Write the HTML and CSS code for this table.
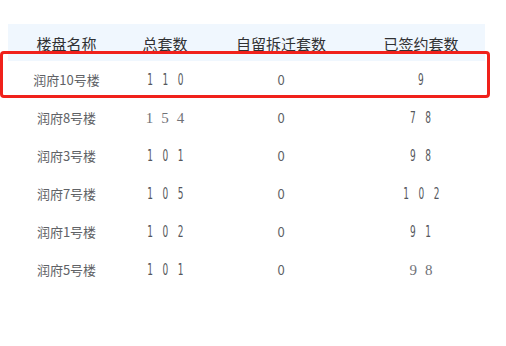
FILE: index.html
```html
<!DOCTYPE html>
<html lang="zh">
<head>
<meta charset="utf-8">
<link rel="stylesheet" href="styles.css">
</head>
<body>
<div class="page">
  <div class="table">
    <div class="row head">
      <div class="cell">楼盘名称</div>
      <div class="cell">总套数</div>
      <div class="cell">自留拆迁套数</div>
      <div class="cell">已签约套数</div>
    </div>
    <div class="row">
      <div class="cell">润府10号楼</div>
      <div class="cell"><span class="num">110</span></div>
      <div class="cell">0</div>
      <div class="cell"><span class="num">9</span></div>
    </div>
    <div class="row">
      <div class="cell">润府8号楼</div>
      <div class="cell"><span class="serif">154</span></div>
      <div class="cell">0</div>
      <div class="cell"><span class="num">78</span></div>
    </div>
    <div class="row">
      <div class="cell">润府3号楼</div>
      <div class="cell"><span class="num">101</span></div>
      <div class="cell">0</div>
      <div class="cell"><span class="num">98</span></div>
    </div>
    <div class="row">
      <div class="cell">润府7号楼</div>
      <div class="cell"><span class="num">105</span></div>
      <div class="cell">0</div>
      <div class="cell"><span class="num">102</span></div>
    </div>
    <div class="row">
      <div class="cell">润府1号楼</div>
      <div class="cell"><span class="num">102</span></div>
      <div class="cell">0</div>
      <div class="cell"><span class="num">91</span></div>
    </div>
    <div class="row">
      <div class="cell">润府5号楼</div>
      <div class="cell"><span class="num">101</span></div>
      <div class="cell">0</div>
      <div class="cell"><span class="serif">98</span></div>
    </div>
    <div class="highlight"></div>
  </div>
</div>
</body>
</html>
```
FILE: styles.css
```css
html, body {
  margin: 0;
  padding: 0;
  background: #ffffff;
}
.page {
  padding: 24px 21px 0 8px;
  font-family: "Noto Sans CJK SC", "Noto Sans", sans-serif;
}
.table {
  position: relative;
  width: 477px;
}
.row {
  display: grid;
  grid-template-columns: 117px 80px 152px 128px;
  height: 38px;
  align-items: center;
  font-size: 13px;
  color: #606266;
}
.row.head {
  height: 37px;
  background: #f0f7fe;
  color: #303133;
  font-size: 15px;
  padding-top: 3px;
  box-sizing: border-box;
}
.cell {
  display: flex;
  justify-content: center;
  line-height: 20px;
  white-space: nowrap;
}
.num {
  display: inline-block;
  font-family: "DejaVu Sans", sans-serif;
  font-size: 15px;
  transform: scaleX(0.6);
  letter-spacing: 16px;
  padding-left: 16px;
  color: #55575c;
}
.serif {
  font-family: "Liberation Serif", serif;
  font-size: 15px;
  letter-spacing: 8px;
  padding-left: 8px;
  color: #707278;
}
.highlight {
  position: absolute;
  left: -8px;
  top: 27px;
  width: 490px;
  height: 47px;
  box-sizing: border-box;
  border: 3px solid #f0211b;
  border-radius: 4px;
  pointer-events: none;
}
```
